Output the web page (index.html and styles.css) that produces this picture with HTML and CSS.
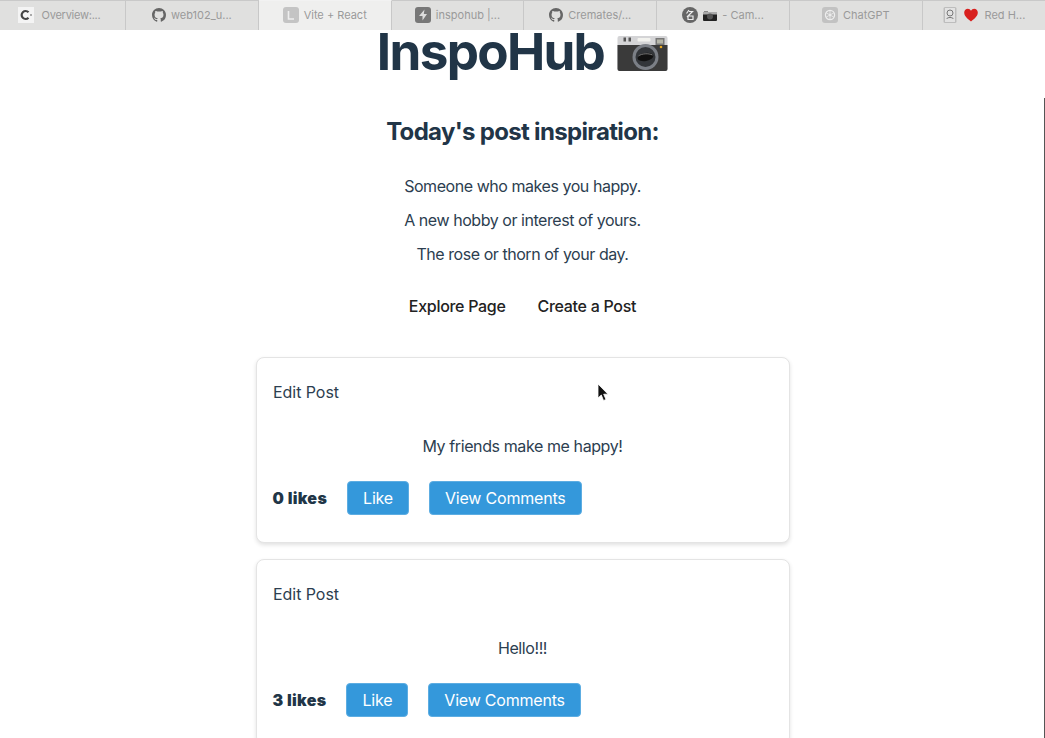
FILE: index.html
```html
<!DOCTYPE html>
<html lang="en">
<head>
<meta charset="utf-8">
<title>Vite + React</title>
<link rel="stylesheet" href="styles.css">
</head>
<body>
<nav class="tabs">
  <div class="tab tab-first">
    <svg class="fav" viewBox="0 0 16 16"><rect width="16" height="16" fill="#f4f4f4"/><path d="M10.5 5.200A4 4 0 1 0 10.500 10.800" fill="none" stroke="#444" stroke-width="2.200"/><rect x="12" y="7" width="2" height="2" fill="#aaa"/></svg>
    <span>Overview:...</span>
  </div>
  <div class="tab">
    <svg class="fav fav-lg" viewBox="0 0 16 16"><path fill="#666" d="M8 0C3.58 0 0 3.58 0 8c0 3.54 2.29 6.53 5.47 7.59.4.07.55-.17.55-.38 0-.19-.01-.82-.01-1.49-2.01.37-2.53-.49-2.69-.94-.09-.23-.48-.94-.82-1.13-.28-.15-.68-.52-.01-.53.63-.01 1.08.58 1.23.82.72 1.21 1.87.87 2.33.66.07-.52.28-.87.51-1.07-1.78-.2-3.64-.89-3.64-3.95 0-.87.31-1.59.82-2.15-.08-.2-.36-1.02.08-2.12 0 0 .67-.21 2.2.82.64-.18 1.32-.27 2-.27s1.36.09 2 .27c1.53-1.04 2.2-.82 2.2-.82.44 1.1.16 1.92.08 2.12.51.56.82 1.27.82 2.15 0 3.07-1.87 3.75-3.65 3.95.29.25.54.73.54 1.48 0 1.07-.01 1.93-.01 2.2 0 .21.15.46.55.38A8.01 8.01 0 0 0 16 8c0-4.42-3.58-8-8-8z"/></svg>
    <span>web102_u...</span>
  </div>
  <div class="tab tab-active">
    <svg class="fav" viewBox="0 0 16 16"><rect width="16" height="16" rx="3" fill="#c4c4c4"/><path d="M5.500 4v8h5.500" fill="none" stroke="#eee" stroke-width="1.600"/></svg>
    <span>Vite + React</span>
  </div>
  <div class="tab">
    <svg class="fav" viewBox="0 0 16 16"><rect width="16" height="16" rx="3" fill="#777"/><path d="M9.500 2.500L4 9h3.500v4.500L12 7H8.800z" fill="#ddd"/></svg>
    <span>inspohub |...</span>
  </div>
  <div class="tab">
    <svg class="fav fav-lg" viewBox="0 0 16 16"><path fill="#666" d="M8 0C3.58 0 0 3.58 0 8c0 3.54 2.29 6.53 5.47 7.59.4.07.55-.17.55-.38 0-.19-.01-.82-.01-1.49-2.01.37-2.53-.49-2.69-.94-.09-.23-.48-.94-.82-1.13-.28-.15-.68-.52-.01-.53.63-.01 1.08.58 1.23.82.72 1.21 1.87.87 2.33.66.07-.52.28-.87.51-1.07-1.78-.2-3.64-.89-3.64-3.95 0-.87.31-1.59.82-2.15-.08-.2-.36-1.02.08-2.12 0 0 .67-.21 2.2.82.64-.18 1.32-.27 2-.27s1.36.09 2 .27c1.53-1.04 2.2-.82 2.2-.82.44 1.1.16 1.92.08 2.12.51.56.82 1.27.82 2.15 0 3.07-1.87 3.75-3.65 3.95.29.25.54.73.54 1.48 0 1.07-.01 1.93-.01 2.2 0 .21.15.46.55.38A8.01 8.01 0 0 0 16 8c0-4.42-3.58-8-8-8z"/></svg>
    <span>Cremates/...</span>
  </div>
  <div class="tab">
    <svg class="fav" viewBox="0 0 16 16"><circle cx="8" cy="8" r="8" fill="#666"/><path d="M7 3L4.500 6.500M7 4.500h3.500L5 10M6 9h5v3.500H6z" fill="none" stroke="#eee" stroke-width="1.200"/></svg>
    <svg class="cam-small" viewBox="0 0 14 11"><rect y="2" width="14" height="9" rx="1" fill="#222"/><rect x="1" y="1" width="4" height="1.500" fill="#888"/><rect y="2" width="14" height="2.500" fill="#aaa"/><circle cx="7" cy="6.500" r="3" fill="#555"/></svg>
    <span>- Cam...</span>
  </div>
  <div class="tab">
    <svg class="fav" viewBox="0 0 16 16"><rect width="16" height="16" rx="3" fill="#c2c2c2"/><circle cx="8" cy="8" r="4.600" fill="none" stroke="#eee" stroke-width="1.200"/><path d="M8 3.400v6M4 5.700l5 3M4 10.300l5-3M12 5.700l-5 3M12 10.300l-5-3M8 12.600v-6" stroke="#eee" stroke-width=".8"/></svg>
    <span>ChatGPT</span>
  </div>
  <div class="tab tab-last">
    <svg class="fav" viewBox="0 0 16 16"><rect x="1.500" width="13" height="16" rx="1.500" fill="#bdbdbd"/><rect x="3" y="1" width="10" height="14" fill="#e2e2e2"/><circle cx="8" cy="6" r="3" fill="none" stroke="#777"/><path d="M4.500 12c1-2 6-2 7 0" fill="none" stroke="#777"/></svg>
    <svg class="heart" viewBox="0 0 14 14"><path fill="#d8201e" d="M7 13.500C3 10.500.2 8 .2 4.600.2 2.300 2 .8 3.800.8 5.200.8 6.300 1.500 7 2.800 7.700 1.500 8.800.8 10.200.8c1.800 0 3.600 1.500 3.600 3.800C13.800 8 11 10.500 7 13.500z"/></svg>
    <span>Red H...</span>
  </div>
</nav>

<main class="page">
  <h1 class="title">InspoHub
    <svg class="camera" viewBox="0 0 50 36"><rect x="0" y="0" width="50" height="35" rx="2" fill="#d4d4d6"/><rect x="6" y="1.500" width="2.500" height="4" fill="#555"/><rect x="11" y="1.500" width="2.500" height="4" fill="#555"/><rect x="20" y="2" width="13" height="3.500" rx="1" fill="#f2f2ee"/><rect x="38" y="2" width="9" height="7" fill="#777"/><rect x="39.500" y="3.500" width="6" height="4" fill="#b5b5a8"/><path d="M0 9h50v24a2 2 0 0 1-2 2H2a2 2 0 0 1-2-2z" fill="#3a3a3a"/><circle cx="43.500" cy="11" r="1.300" fill="#e8a820"/><circle cx="28" cy="21" r="13" fill="#7b7f86"/><circle cx="28" cy="21" r="10" fill="#33363a"/><ellipse cx="28" cy="21" rx="8" ry="4" fill="#111" transform="rotate(-10 28 21)"/><path d="M21 20c3-2.500 10-3 14-1" stroke="#777" fill="none"/></svg>
  </h1>
  <h2 class="subtitle">Today's post inspiration:</h2>
  <ul class="prompts">
    <li>Someone who makes you happy.</li>
    <li>A new hobby or interest of yours.</li>
    <li>The rose or thorn of your day.</li>
  </ul>
  <div class="links">
    <a class="link" href="#explore">Explore Page</a>
    <a class="link" href="#create">Create a Post</a>
  </div>
  <section class="feed">
    <article class="card">
      <a class="edit" href="#edit">Edit Post</a>
      <p class="body">My friends make me happy!</p>
      <div class="actions">
        <strong class="likes">0 likes</strong>
        <button class="btn btn-like">Like</button>
        <button class="btn">View Comments</button>
      </div>
    </article>
    <article class="card">
      <a class="edit" href="#edit">Edit Post</a>
      <p class="body">Hello!!!</p>
      <div class="actions">
        <strong class="likes">3 likes</strong>
        <button class="btn btn-like">Like</button>
        <button class="btn">View Comments</button>
      </div>
    </article>
  </section>
</main>

<div class="scrollbar"></div>
<svg class="cursor" viewBox="0 0 12 19"><path d="M1 1v14l3.300-3 2.200 5.500 2.500-1-2.300-5.300H11z" fill="#111" stroke="#fff" stroke-width=".8"/></svg>
</body>
</html>
```
FILE: styles.css
```css
* { box-sizing: border-box; }
html, body { margin: 0; height: 100%; }
body {
  position: relative;
  height: 738px;
  overflow: hidden;
  background: #fff;
  color: #213547;
  font-family: Inter, "Liberation Sans", sans-serif;
  font-size: 16px;
}
.tabs {
  display: flex;
  height: 30px;
  background: #e0e0df;
  border-top: 1px solid #c9c9c9;
  color: #9a9a9a;
  font-size: 11px;
}
.tab {
  display: flex;
  flex: 0 0 132.8px;
  align-items: center;
  justify-content: center;
  gap: 5px;
  border-right: 1px solid #c8c8c8;
  white-space: nowrap;
  padding-bottom: 1px;
}
.tab-first {
  flex-basis: 126px;
  gap: 8px;
  padding-right: 7px;
  letter-spacing: -0.25px;
}
.tab-last { flex: 1 1 auto; border-right: 0; gap: 6px; }
.tab-active { background: #efefee; border-top: 1px solid #f2f2f2; margin-top: -1px; }
.fav { width: 16px; height: 16px; flex: none; }
.fav-lg { width: 14px; height: 14px; }
.cam-small { width: 14px; height: 11px; }
.heart { width: 14px; height: 14px; }
.page {
  display: flex;
  flex-direction: column;
  align-items: center;
}
.title {
  display: flex;
  align-items: center;
  gap: 13px;
  margin: -8px 0 0;
  font-size: 51.2px;
  font-weight: 700;
  line-height: 58px;
  letter-spacing: -1.7px;
}
.camera { width: 51px; height: 36px; margin-top: 5px; }
.subtitle {
  margin: 37px 0 0;
  font-size: 24px;
  font-weight: 700;
  line-height: 29px;
  letter-spacing: -0.68px;
}
.prompts {
  list-style: none;
  margin: 28px 0 0;
  padding: 0;
  text-align: center;
  line-height: 24px;
  letter-spacing: -0.45px;
  color: #2c3e50;
}
.prompts li + li { margin-top: 10px; }
.links {
  display: flex;
  gap: 32px;
  margin-top: 28px;
}
.link {
  color: #222;
  font-weight: 500;
  line-height: 24px;
  letter-spacing: -0.3px;
  text-decoration: none;
}
.feed {
  display: flex;
  flex-direction: column;
  gap: 16px;
  width: 534px;
  margin-top: 39px;
}
.card {
  padding: 24px 16px 27px;
  background: #fff;
  border: 1px solid #e4e4e4;
  border-radius: 8px;
  box-shadow: 0 2px 4px rgba(0, 0, 0, .12);
}
.edit {
  display: block;
  margin-left: .5px;
  color: #2c3e50;
  line-height: 20px;
  letter-spacing: -0.05px;
  text-decoration: none;
}
.body {
  margin: 34px 0 0;
  color: #2c3e50;
  line-height: 20px;
  letter-spacing: -0.4px;
  text-align: center;
}
.actions {
  display: flex;
  align-items: center;
  margin-top: 25px;
}
.likes { font-weight: 900; margin-right: 20px; letter-spacing: 0.3px; }
.btn {
  height: 34px;
  padding: 0 15px;
  background: #3498db;
  color: #fff;
  border: 1px solid #5dade2;
  border-radius: 4px;
  font: 400 16px Inter, "Liberation Sans", sans-serif;
  letter-spacing: -0.2px;
}
.btn-like { margin-right: 20px; }
.scrollbar {
  position: absolute;
  top: 98px;
  right: 0;
  bottom: 0;
  width: 1px;
  background: #555;
}
.cursor {
  position: absolute;
  left: 597px;
  top: 383px;
  width: 12px;
  height: 19px;
}
```
